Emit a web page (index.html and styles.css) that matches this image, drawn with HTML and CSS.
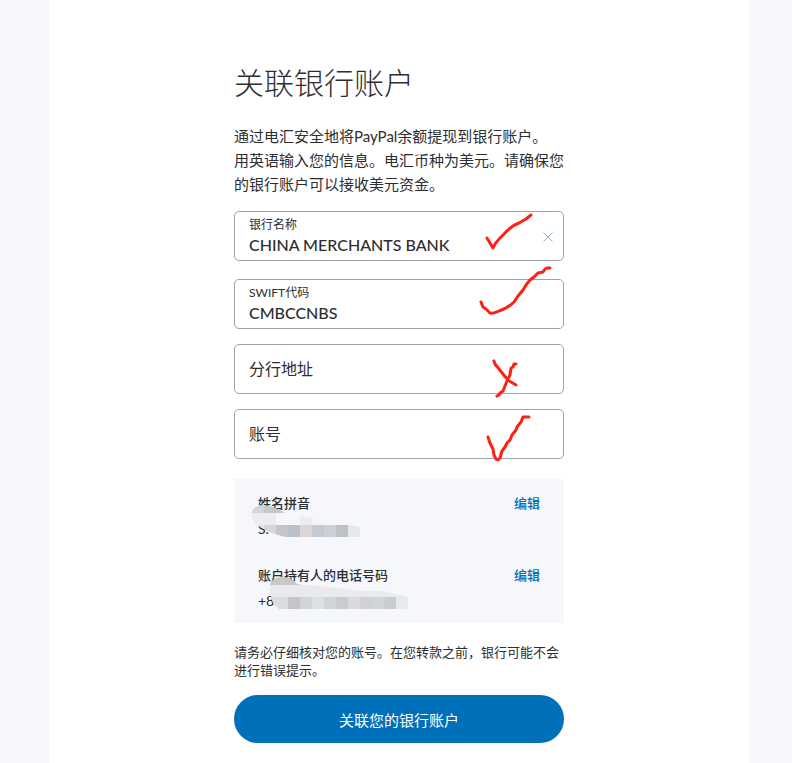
FILE: index.html
```html
<!DOCTYPE html>
<html lang="zh-CN">
<head>
<meta charset="utf-8">
<meta name="viewport" content="width=device-width, initial-scale=1">
<title>关联银行账户</title>
<link rel="stylesheet" href="styles.css">
</head>
<body>
<main class="panel">
  <form class="content">
    <h1 class="title">关联银行账户</h1>
    <p class="intro">通过电汇安全地将PayPal余额提现到银行账户。<br>用英语输入您的信息。电汇币种为美元。请确保您的银行账户可以接收美元资金。</p>

    <div class="fields">
      <div class="field field-first">
        <label class="field-label" for="bank">银行名称</label>
        <input class="field-input" id="bank" type="text" value="CHINA MERCHANTS BANK">
        <button class="clear" type="button" aria-label="清除">
          <svg width="10" height="10" viewBox="0 0 10 10"><path d="M0.500 0.500L9.500 9.500M9.500 0.500L0.500 9.500"/></svg>
        </button>
        <svg class="mark" viewBox="0 0 90 50"><path d="M13 27L19 37Q21 32 26 27L34 19Q39 14 45 12L52 8L57 4"/></svg>
      </div>
      <div class="field">
        <label class="field-label" for="swift">SWIFT代码</label>
        <input class="field-input" id="swift" type="text" value="CMBCCNBS">
        <svg class="mark" viewBox="0 0 90 50"><path d="M7 23L9 28L12 30L16 34Q19 35 25 32Q34 29 40 23L44 17L49 11L52 6L56 1L60 -2L64 -6L69 -7L71 -10L73 -11L76 -11"/></svg>
      </div>
      <div class="field field-empty">
        <label class="field-label" for="branch">分行地址</label>
        <input class="field-input" id="branch" type="text">
        <svg class="mark" viewBox="0 0 90 50"><path d="M20 17L21 20L25 25L29 30L34 36L37 38L42 41M42 20L40 20L39 23L37 24L36 31L33 37L31 42L29 47L26 49L25 51L23 52"/></svg>
      </div>
      <div class="field field-empty">
        <label class="field-label" for="account">账号</label>
        <input class="field-input" id="account" type="text">
        <svg class="mark" viewBox="0 0 90 50"><path d="M14 28L16 34L19 40L20 46L22 50L24 51L26 49L28 42L31 38L33 34L36 31L38 26L42 21L43 18L47 13L49 8L55 8"/></svg>
      </div>
    </div>

    <section class="details">
      <div class="detail">
        <div class="detail-head"><span>姓名拼音</span><a href="#name">编辑</a></div>
        <div class="detail-value">S.</div>
        <svg class="mask" viewBox="0 0 180 50">
          <clipPath id="c1"><path d="M18 13Q20 6 30 6Q43 8 51 14H66V17L80 20L90 23V26H114L126 28V38H51Q31 33 21 24Q17 19 18 13Z"/></clipPath>
          <g clip-path="url(#c1)">
            <path fill="#d5d6d9" d="M16 4H30V14H16Z"/><path fill="#c6c7ca" d="M30 4H54V14H30Z"/><path fill="#ebedf0" d="M16 14H42V26H16Z"/><path fill="#f5f7fb" d="M42 14H66V26H42Z"/><path fill="#ebecee" d="M66 14H78V26H66Z"/><path fill="#f1f3f6" d="M78 14H102V26H78Z"/>
            <path fill="#e1e4e8" d="M18 26H30V38H18Z"/><path fill="#d4d6db" d="M30 26H42V38H30Z"/><path fill="#c8c5c8" d="M42 26H54V38H42Z"/><path fill="#b9c1ca" d="M54 26H66V38H54Z"/><path fill="#d9d7d7" d="M66 26H78V38H66Z"/><path fill="#c5cad1" d="M78 26H90V38H78Z"/><path fill="#cdd1d7" d="M90 26H102V38H90Z"/><path fill="#bfc1c4" d="M102 26H114V38H102Z"/><path fill="#e4e7eb" d="M114 26H126V38H114Z"/>
          </g>
        </svg>
      </div>
      <div class="detail">
        <div class="detail-head"><span>账户持有人的电话号码</span><a href="#phone">编辑</a></div>
        <div class="detail-value">+86</div>
        <svg class="mask" viewBox="0 0 180 50">
          <clipPath id="c2"><path d="M36 14Q37 7 47 6Q58 6 63 13Q100 16 125 20Q150 19 160 23L174 26V38H45Q38 33 37 26Q35 20 36 14Z"/></clipPath>
          <g clip-path="url(#c2)">
            <path fill="#c8c8ca" d="M34 4H66V14H34Z"/><path fill="#e8eaee" d="M34 14H174V26H34Z"/>
            <path fill="#d9dce1" d="M34 26H54V38H34Z"/><path fill="#c4c5c8" d="M54 26H66V38H54Z"/><path fill="#d2d4d7" d="M66 26H78V38H66Z"/><path fill="#dcdfe4" d="M78 26H90V38H78Z"/><path fill="#d0d4da" d="M90 26H102V38H90Z"/><path fill="#c8ccd1" d="M102 26H114V38H102Z"/><path fill="#d8dade" d="M114 26H126V38H114Z"/><path fill="#cfd1d5" d="M126 26H138V38H126Z"/><path fill="#d2d5d8" d="M138 26H150V38H138Z"/><path fill="#c9cbce" d="M150 26H162V38H150Z"/><path fill="#e6e9ed" d="M162 26H174V38H162Z"/>
          </g>
        </svg>
      </div>
    </section>

    <p class="note">请务必仔细核对您的账号。在您转款之前，银行可能不会进行错误提示。</p>
    <button class="submit" type="submit">关联您的银行账户</button>
  </form>
</main>
</body>
</html>
```
FILE: styles.css
```css
* {
  box-sizing: border-box;
}

body {
  margin: 0;
  padding: 0 43px 0 49px;
  background: #f5f7fb;
  color: #2c2e2f;
  font-family: Lato, "Noto Sans CJK SC", sans-serif;
  font-size: 15px;
}

.panel {
  min-height: 100vh;
  padding: 60px 16px 20px;
  background: #fff;
}

.content {
  max-width: 330px;
  margin: 0 auto;
}

.title {
  margin: 0;
  font-size: 30px;
  font-weight: 300;
  line-height: 44px;
}

.intro {
  margin: 20px 0 15px;
  line-height: 24px;
}

.fields {
  display: flex;
  flex-direction: column;
  gap: 15px;
}

.field {
  position: relative;
  display: flex;
  flex-direction: column;
  height: 50px;
  padding: 4px 14px;
  border: 1px solid #9da3a6;
  border-radius: 5px;
}

.field-first {
  margin-bottom: 3px;
}

.field-label {
  font-size: 12px;
  line-height: 18px;
}

.field-input {
  width: 100%;
  height: 20px;
  padding: 0;
  border: 0;
  outline: 0;
  background: transparent;
  color: inherit;
  font-family: inherit;
  font-size: 16px;
  font-weight: 500;
}

.field-empty {
  justify-content: center;
}

.field-empty .field-label {
  font-size: 16px;
  line-height: 24px;
}

.field-empty .field-input {
  position: absolute;
  inset: 0;
  height: 100%;
  padding: 0 14px;
}

.clear {
  position: absolute;
  top: 20px;
  right: 10px;
  display: flex;
  padding: 0;
  border: 0;
  background: none;
}

.clear path {
  fill: none;
  stroke: #8fb4c8;
}

.mark {
  position: absolute;
  top: -1px;
  right: -1px;
  width: 90px;
  height: 50px;
  overflow: visible;
  pointer-events: none;
}

.mark path {
  fill: none;
  stroke: #fc2114;
  stroke-width: 3;
  stroke-linecap: round;
  stroke-linejoin: round;
}

.details {
  margin-top: 20px;
  background: #f5f7fb;
}

.detail {
  position: relative;
  height: 72px;
  padding: 14px 24px 0;
}

.detail-head {
  display: flex;
  justify-content: space-between;
  font-size: 13px;
  font-weight: 500;
  line-height: 20px;
}

.detail-head a {
  color: #0070ba;
  text-decoration: none;
}

.detail-value {
  margin-top: 6px;
  font-size: 14px;
  line-height: 20px;
}

.mask {
  position: absolute;
  top: 20px;
  left: 0;
  width: 180px;
  height: 50px;
}

.note {
  margin: 20px 0 16px;
  font-size: 13px;
  line-height: 18px;
}

.submit {
  display: block;
  width: 100%;
  height: 48px;
  border: 0;
  border-radius: 24px;
  background: #0070ba;
  color: #fff;
  font-family: inherit;
  font-size: 15px;
}
```
